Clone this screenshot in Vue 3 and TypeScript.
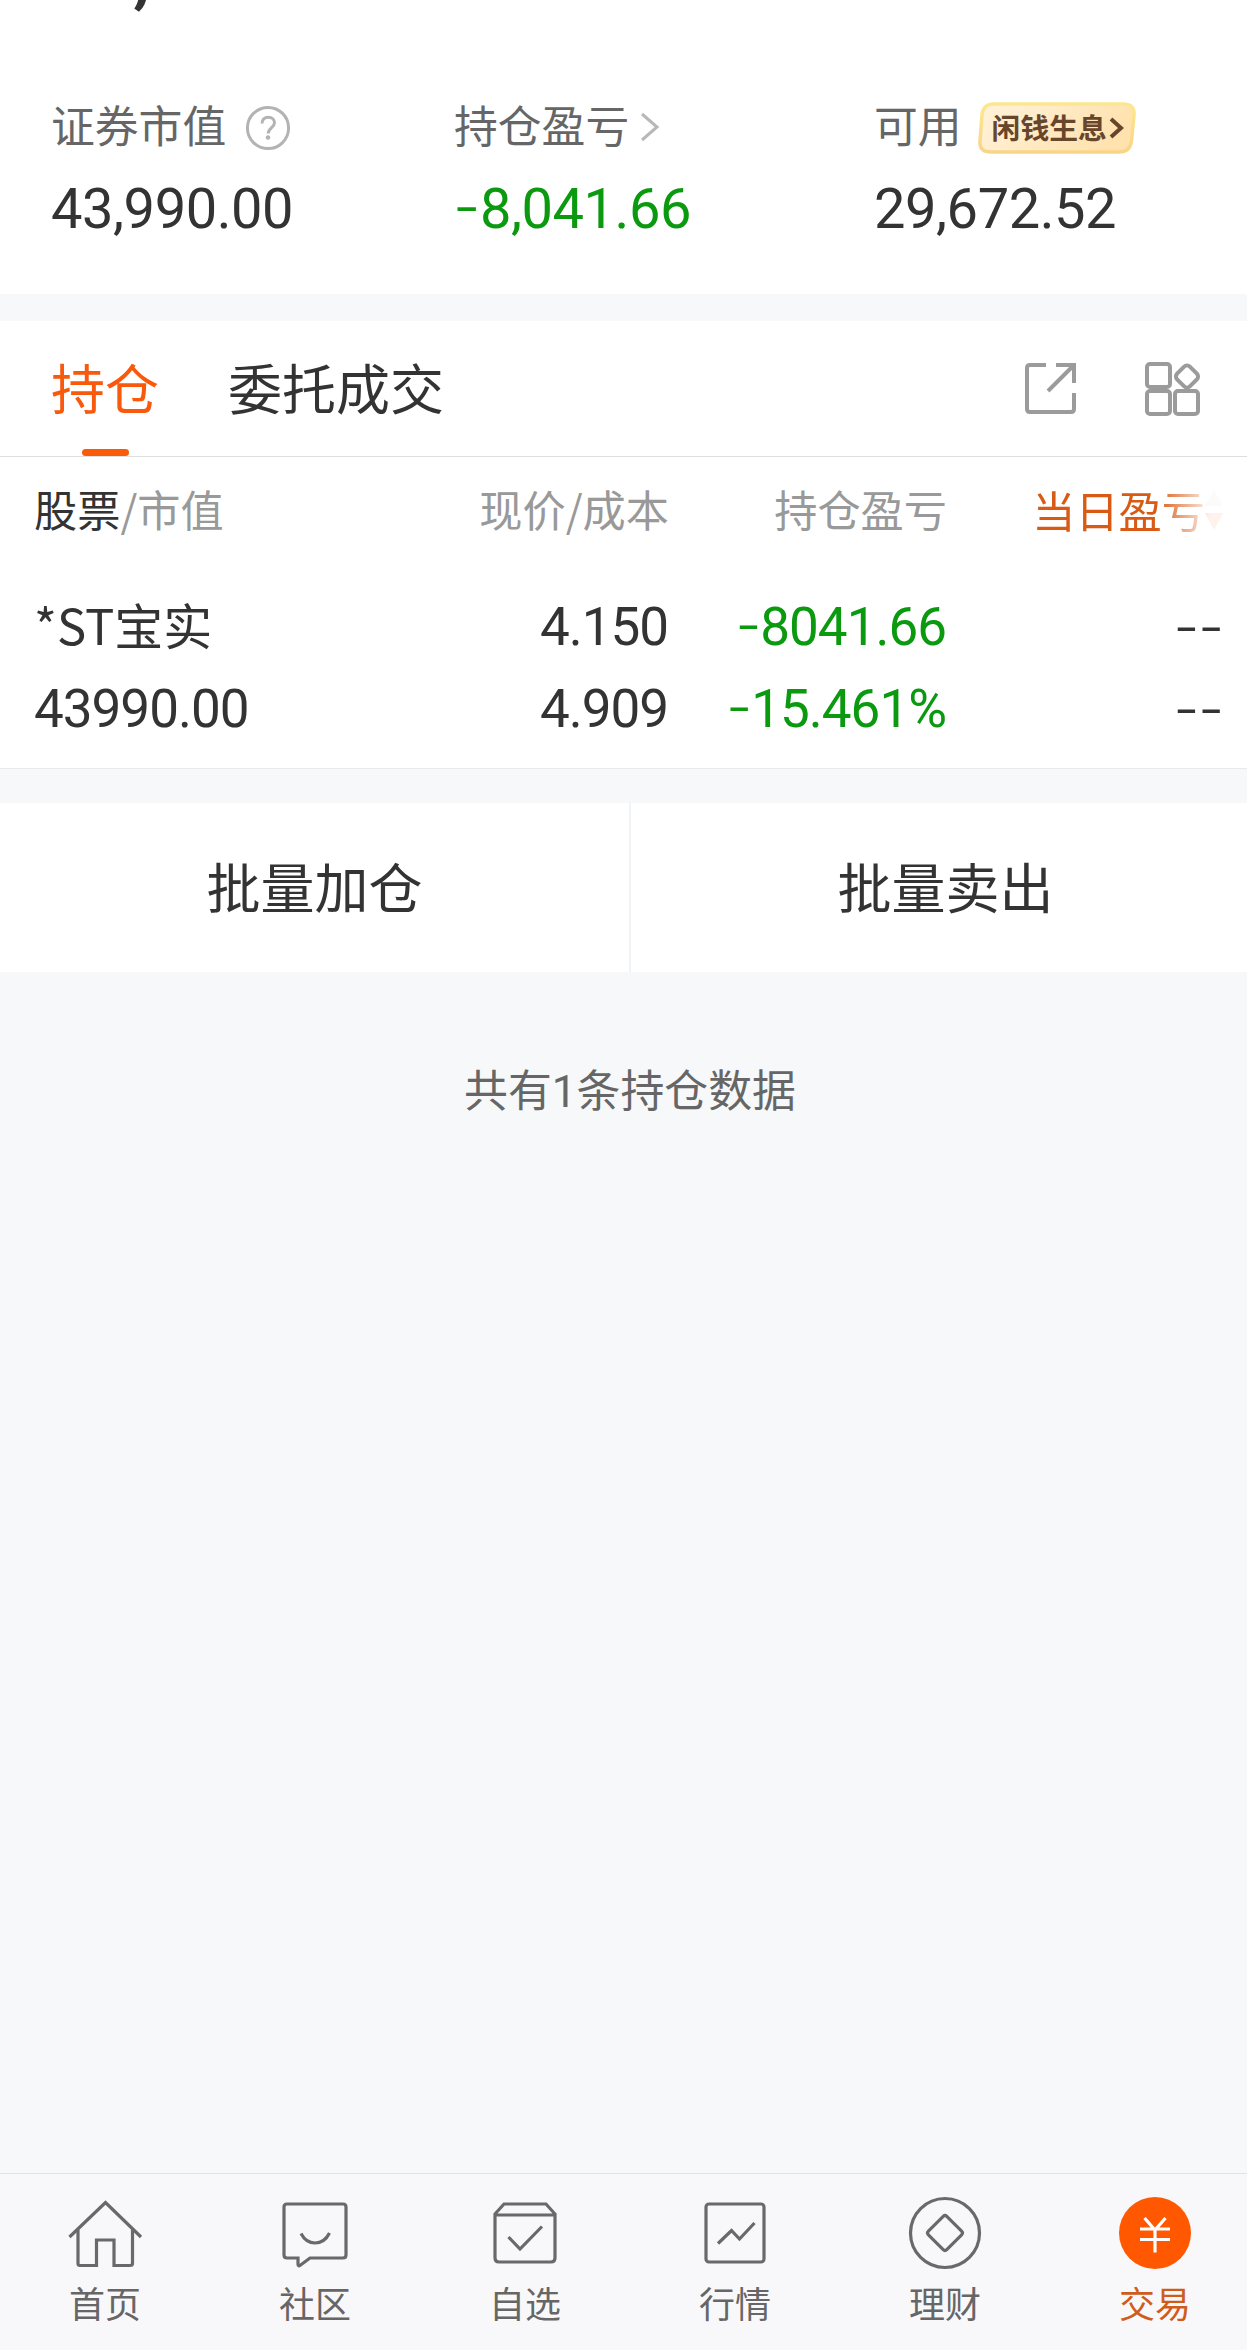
<script setup lang="ts">
interface NavItem {
  key: string
  label: string
}

const navItems: NavItem[] = [
  { key: 'home', label: '首页' },
  { key: 'community', label: '社区' },
  { key: 'watch', label: '自选' },
  { key: 'market', label: '行情' },
  { key: 'wealth', label: '理财' },
  { key: 'trade', label: '交易' },
]
const active = 'trade'
</script>

<template>
  <div class="viewport">
    <div class="page">
      <section class="summary">
        <div class="total">,</div>
        <div class="stats">
          <div class="stat s1">
            <div class="label">
              <span>证券市值</span>
              <svg class="help" width="46" height="46" viewBox="0 0 46 46" fill="none" stroke="#b3b3b3" stroke-width="3">
                <circle cx="23" cy="23" r="20.6" />
                <path d="M17 18.5c0-4 2.6-6.300 6.300-6.300s6.200 2.300 6.200 5.600c0 4.600-6.300 5.300-6.300 10.800" />
                <circle cx="23" cy="32.500" r="2.300" fill="#b3b3b3" stroke="none" />
              </svg>
            </div>
            <div class="num">43,990.00</div>
          </div>
          <div class="stat s2">
            <div class="label">
              <span>持仓盈亏</span>
              <svg class="chev" width="20" height="30" viewBox="0 0 20 30" fill="none" stroke="#b8b8b8" stroke-width="3">
                <path d="M2 2 L17 15 L2 28" />
              </svg>
            </div>
            <div class="num green"><span class="minus">-</span>8,041.66</div>
          </div>
          <div class="stat s3">
            <div class="label">
              <span>可用</span>
              <span class="badge">
                <svg class="badge-bg" width="160" height="54" viewBox="0 0 160 54">
                  <defs>
                    <linearGradient id="bf" x1="0" y1="0" x2="1" y2="0.300">
                      <stop offset="0" stop-color="#fff3dc" />
                      <stop offset="1" stop-color="#ffe2ae" />
                    </linearGradient>
                    <linearGradient id="bs" x1="0" y1="0" x2="0" y2="1">
                      <stop offset="0" stop-color="#fbe88e" />
                      <stop offset="1" stop-color="#f8d588" />
                    </linearGradient>
                  </defs>
                  <path d="M17 3 H146 Q158 3 157 14 L154.500 40 Q153 51 142 51 H14 Q2 51 3 40 L5 14 Q6 3 17 3 Z" fill="url(#bf)" stroke="url(#bs)" stroke-width="3.500" />
                </svg>
                <span class="badge-text">闲钱生息</span>
                <svg class="badge-chev" width="15" height="22" viewBox="0 0 15 22" fill="none" stroke="#68462b" stroke-width="4">
                  <path d="M2 2 L12 11 L2 20" />
                </svg>
              </span>
            </div>
            <div class="num">29,672.52</div>
          </div>
        </div>
      </section>

      <nav class="tabs">
        <div class="tab on">持仓</div>
        <div class="tab">委托成交</div>
        <div class="tools">
          <svg width="54" height="54" viewBox="0 0 54 54" fill="none" stroke="#9b9b9b" stroke-width="4">
            <path d="M22 4 H6 Q3 4 3 7 V48 Q3 51 6 51 H47 Q50 51 50 48 V32" />
            <path d="M32 4 H50 V22 M49 5 L24 30" />
          </svg>
          <svg width="58" height="56" viewBox="0 0 58 56" fill="none" stroke="#9b9b9b" stroke-width="4">
            <rect x="3" y="3" width="23" height="23" rx="3" />
            <rect x="3" y="30" width="23" height="23" rx="3" />
            <rect x="31" y="30" width="23" height="23" rx="3" />
            <rect x="34" y="6.500" width="18" height="18" rx="4" transform="rotate(45 43 15.500)" />
          </svg>
        </div>
      </nav>

      <section class="table">
        <div class="row head">
          <div class="c1"><b>股票</b>/市值</div>
          <div class="c2">现价/成本</div>
          <div class="c3">持仓盈亏</div>
          <div class="c4">
            <span>当日盈亏</span>
            <svg width="18" height="40" viewBox="0 0 18 40">
              <path d="M9 0 L18 16 H0 Z" fill="#ccc" />
              <path d="M9 40 L18 23 H0 Z" fill="#ff5a0a" />
            </svg>
          </div>
        </div>
        <div class="row name">
          <div class="c1 cjk">*ST宝实</div>
          <div class="c2">4.150</div>
          <div class="c3 green"><span class="minus">-</span>8041.66</div>
          <div class="c4 dashes">--</div>
        </div>
        <div class="row">
          <div class="c1">43990.00</div>
          <div class="c2">4.909</div>
          <div class="c3 green"><span class="minus">-</span>15.461%</div>
          <div class="c4 dashes">--</div>
        </div>
      </section>

      <section class="actions">
        <button type="button">批量加仓</button>
        <button type="button">批量卖出</button>
      </section>

      <p class="count">共有<span class="digit">1</span>条持仓数据</p>

      <footer class="nav">
        <div v-for="item in navItems" :key="item.key" class="nav-item" :class="{ active: item.key === active }">
          <svg width="78" height="78" viewBox="0 0 78 78" fill="none" stroke="#696969" stroke-width="3.200">
            <template v-if="item.key === 'home'">
              <path d="M3.500 43 L39.500 8.500 L75 43" />
              <path d="M12 36 V69.500 Q12 71.500 14 71.500 H30.500 V46 H48 V71.500 H64 Q66.500 71.500 66.500 69.500 V36" />
            </template>
            <template v-else-if="item.key === 'community'">
              <path d="M11 10 H67 Q70 10 70 13 V61 Q70 64 67 64 H34 L24 71.500 Q22 72.500 22 70 V64 H11 Q8 64 8 61 V13 Q8 10 11 10 Z" />
              <path d="M25 39.500 Q30 49 39 49 Q48.500 49 53.500 39" />
            </template>
            <template v-else-if="item.key === 'watch'">
              <path d="M9 20 L18 10 H60 L69 20 V64 Q69 68 65 68 H13 Q9 68 9 64 Z M9 21 H69" />
              <path d="M22.500 43 L34 55 L56 32.500" />
            </template>
            <template v-else-if="item.key === 'market'">
              <rect x="10" y="10" width="58" height="58" rx="3" />
              <path d="M22 49.500 L35.500 36.500 L43.500 45 L58.500 29" />
            </template>
            <template v-else-if="item.key === 'wealth'">
              <circle cx="39" cy="39" r="34.500" />
              <rect x="26" y="26" width="26" height="26" rx="2.500" transform="rotate(45 39 39)" />
            </template>
            <template v-else>
              <circle cx="39" cy="39" r="36" fill="#ff5800" stroke="none" />
              <path d="M28.500 24 L39 36 L49.500 24 M24 35 H54 M24 45.500 H54 M39 35 V58.500" stroke="#fff" />
            </template>
          </svg>
          <span>{{ item.label }}</span>
        </div>
      </footer>
    </div>
  </div>
</template>

<style>
body {
  margin: 0;
}
</style>

<style scoped>
.viewport {
  width: 100%;
  height: 2350px;
  overflow: hidden;
  background: #f7f8fa;
}
.page {
  width: 1260px;
  height: 2350px;
  display: flex;
  flex-direction: column;
  font-family: "Noto Sans CJK SC", sans-serif;
  color: #333;
}
.summary {
  display: flow-root;
  height: 294px;
  background: #fff;
  overflow: hidden;
}
.total {
  height: 60px;
  padding-left: 133px;
  font: 90px/60px Roboto, sans-serif;
  margin-top: -61px;
}
.stats {
  display: flex;
  margin-top: 87px;
  padding-left: 51px;
}
.s1 { width: 403px; }
.s2 { width: 420px; }
.label {
  display: flex;
  align-items: center;
  height: 78px;
  font-size: 43.800px;
  line-height: 78px;
  color: #666;
}
.label > span:first-child { margin-top: -2px; }
.help { margin: 6px 0 0 19px; }
.chev { margin: 4px 0 0 11px; }
.num {
  height: 86px;
  font: 56px/91px Roboto, sans-serif;
  letter-spacing: -0.450px;
  white-space: nowrap;
}
.s2 .num { margin-left: -1px; }
.green { color: #0a990f; }
.minus { font-family: Inter, sans-serif; font-size: 1.080em; line-height: 1; font-weight: 300; }
.badge {
  position: relative;
  display: flex;
  align-items: center;
  width: 160px;
  height: 54px;
  margin: 6px 0 0 15px;
}
.badge-bg { position: absolute; left: 0; top: 0; }
.badge-text {
  position: relative;
  margin: -3px 0 0 15px;
  font-size: 28.800px;
  font-weight: 700;
  line-height: 54px;
  color: #68462b;
}
.badge-chev { position: relative; margin-left: 2px; }
.tabs {
  display: flex;
  height: 135px;
  margin-top: 27px;
  padding-left: 51px;
  background: #fff;
  border-bottom: 1px solid #dedede;
}
.tab {
  position: relative;
  height: 135px;
  margin-right: 69px;
  font-size: 54px;
  line-height: 132px;
}
.tab.on { color: #f8590c; }
.tab.on::after {
  content: "";
  position: absolute;
  left: 31px;
  bottom: 0;
  width: 47px;
  height: 7px;
  border-radius: 4px;
  background: #fb5a08;
}
.tools {
  display: flex;
  gap: 66px;
  margin: 40px 0 0 auto;
  padding-right: 58px;
}
.table {
  height: 311px;
  background: #fff;
  border-bottom: 1px solid #e8e9eb;
}
.row {
  display: grid;
  grid-template-columns: 336px 298px 278px 277px;
  height: 82px;
  padding-left: 34px;
  font: 53px/84px Roboto, "Noto Sans CJK SC", sans-serif;
  letter-spacing: -1px;
}
.row > div { white-space: nowrap; }
.head {
  height: 128px;
  font: 43.200px/103px "Noto Sans CJK SC", sans-serif;
  letter-spacing: 0;
  color: #999;
}
.head b { font-weight: 400; color: #333; }
.head .c2, .head .c3 { margin-right: -1px; }
.c2, .c3, .c4 { text-align: right; }
.cjk { font-family: "Noto Sans CJK SC", sans-serif; font-size: 49px; line-height: 77px; letter-spacing: 0; }
.head .c4 {
  display: flex;
  align-items: center;
  justify-content: flex-end;
  height: 105px;
  color: #d95a14;
  -webkit-mask-image: linear-gradient(90deg, #000 210px, rgba(0, 0, 0, 0.080) 264px);
  mask-image: linear-gradient(90deg, #000 210px, rgba(0, 0, 0, 0.080) 264px);
}
.dashes { font-family: Inter, sans-serif; font-weight: 300; font-size: 57px; }
.actions {
  display: flex;
  height: 169px;
  margin-top: 34px;
  background: #fff;
}
.actions button {
  flex: 1;
  padding: 0;
  border: 0;
  background: none;
  font: 54px/162px "Noto Sans CJK SC", sans-serif;
  height: 166px;
  color: #333;
}
.actions button + button { border-left: 2px solid #f2f3f5; height: 169px; padding-bottom: 3px; }
.count {
  margin: 86px 0 0;
  font-size: 43.900px;
  line-height: 60px;
  text-align: center;
  color: #666;
}
.digit { font-family: Roboto, sans-serif; line-height: 1; }
.nav {
  display: flex;
  height: 176px;
  margin-top: auto;
  border-top: 1px solid #e2e3e5;
  background: #f8f8fa;
}
.nav-item {
  flex: 1;
  display: flex;
  flex-direction: column;
  align-items: center;
  padding-top: 20px;
  font-size: 36px;
  line-height: 61px;
  color: #666;
}
.nav-item.active { color: #cf5c1c; }
</style>
